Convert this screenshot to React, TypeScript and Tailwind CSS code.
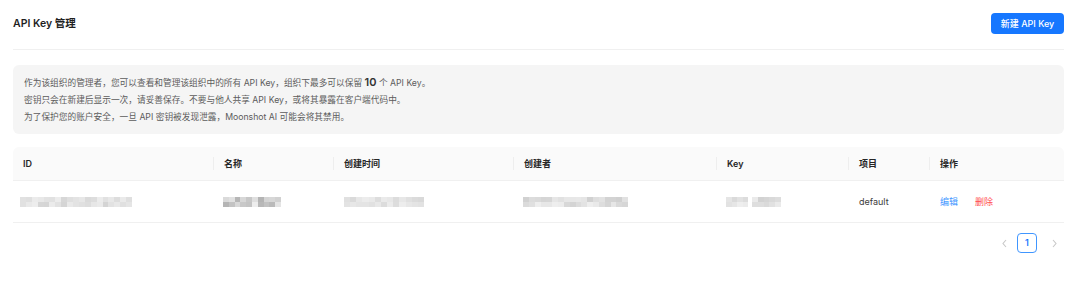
import React from "react";

const FONT = { fontFamily: 'Inter, "Noto Sans CJK SC", sans-serif' };

// Deterministic pseudo-random greys for the pixelated (redacted) cells.
function greys(seed: number, count: number, dark: number) {
  const out: string[] = [];
  let s = seed;
  for (let i = 0; i < count; i++) {
    s = (s * 9301 + 49297) % 233280;
    const r = s / 233280;
    const v = Math.round(238 - r * dark);
    out.push(`rgb(${v},${v},${v})`);
  }
  return out;
}

function Mosaic({ width, seed, dark = 30 }: { width: number; seed: number; dark?: number }) {
  const cols = Math.round(width / 6);
  const cells = greys(seed, cols * 2, dark);
  return (
    <div className="grid h-[10px]" style={{ width, gridTemplateColumns: `repeat(${cols}, 1fr)` }}>
      {cells.map((c, i) => (
        <div key={i} style={{ background: c }} />
      ))}
    </div>
  );
}

const COLS = [
  { label: "ID", w: "w-[200px]" },
  { label: "名称", w: "w-[120px]" },
  { label: "创建时间", w: "w-[180px]" },
  { label: "创建者", w: "w-[203px]" },
  { label: "Key", w: "w-[132px]" },
  { label: "项目", w: "w-[81px]" },
  { label: "操作", w: "flex-1" },
];

export default function App() {
  return (
    <div className="h-[289px] w-[1080px] bg-white pl-[13px] pr-[16px] text-[rgba(0,0,0,0.88)]" style={FONT}>
      {/* Header */}
      <div className="flex items-center justify-between border-b border-[#f0f0f0] pb-[15px] pt-[13px]">
        <h1 className="text-[10.5px] font-semibold text-[#1f1f1f]">API Key 管理</h1>
        <button
          type="button"
          className="h-[21px] w-[73px] rounded-[4px] bg-[#1677ff] text-[9px] font-medium text-white"
        >
          新建 API Key
        </button>
      </div>

      {/* Notice */}
      <div className="mt-[15px] rounded-[6px] bg-[#f5f5f5] px-[11px] pb-[8px] pt-[10px] text-[8.7px] leading-[17px] text-[#5c5c5c]">
        <p>
          作为该组织的管理者，您可以查看和管理该组织中的所有 API Key，组织下最多可以保留{" "}
          <span className="text-[11px] font-semibold leading-[0] text-[#333]">10</span> 个 API Key。
        </p>
        <p>密钥只会在新建后显示一次，请妥善保存。不要与他人共享 API Key，或将其暴露在客户端代码中。</p>
        <p>为了保护您的账户安全，一旦 API 密钥被发现泄露，Moonshot AI 可能会将其禁用。</p>
      </div>

      {/* Table */}
      <div className="mt-[13px] text-[9px]">
        <div className="flex h-[34px] items-center rounded-t-[6px] border-b border-[#f0f0f0] bg-[#fafafa] font-semibold text-[#262626]">
          {COLS.map((c, i) => (
            <div key={c.label} className={`${c.w} flex h-full items-center`}>
              {i > 0 && <span className="h-[13px] w-px bg-[#eeeeee]" />}
              <span className="pl-[10px]">{c.label}</span>
            </div>
          ))}
        </div>
        <div className="flex h-[42px] items-center border-b border-[#f0f0f0] text-[#3b3b3b]">
          <div className="w-[200px] pl-[7px]">
            <Mosaic width={112} seed={7} dark={26} />
          </div>
          <div className="w-[120px] pl-[10px]">
            <Mosaic width={58} seed={3} dark={60} />
          </div>
          <div className="w-[180px] pl-[11px]">
            <Mosaic width={80} seed={11} dark={22} />
          </div>
          <div className="w-[203px] pl-[10px]">
            <Mosaic width={105} seed={19} dark={30} />
          </div>
          <div className="flex w-[132px] gap-[4px] pl-[10px]">
            <Mosaic width={22} seed={5} dark={22} />
            <Mosaic width={29} seed={23} dark={30} />
          </div>
          <div className="w-[81px] pl-[11px]">default</div>
          <div className="flex flex-1 gap-[17px] pl-[11px]">
            <span className="text-[#4096ff]">编辑</span>
            <span className="text-[#ff4d4f]">删除</span>
          </div>
        </div>
      </div>

      {/* Pagination */}
      <div className="mt-[10px] flex items-center justify-end text-[9px]">
        <span className="flex h-[20px] w-[20px] items-center justify-center text-[#c8c8c8]">
          <svg width="7" height="9" viewBox="0 0 7 9" fill="none">
            <path d="M5 1L2 4.5 5 8" stroke="currentColor" strokeWidth="1.1" />
          </svg>
        </span>
        <span className="ml-[3px] flex h-[20px] w-[20px] items-center justify-center rounded-[4px] border border-[#4096ff] font-semibold text-[#1677ff]">
          1
        </span>
        <span className="ml-[7px] flex h-[20px] w-[20px] items-center justify-center text-[#c8c8c8]">
          <svg width="7" height="9" viewBox="0 0 7 9" fill="none">
            <path d="M2 1L5 4.5 2 8" stroke="currentColor" strokeWidth="1.1" />
          </svg>
        </span>
      </div>
    </div>
  );
}
